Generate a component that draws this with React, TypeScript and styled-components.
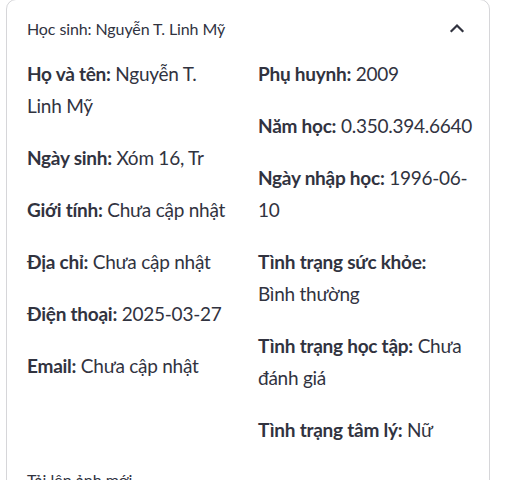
import React from "react";
import styled, { createGlobalStyle } from "styled-components";

const Global = createGlobalStyle`
  html, body { margin: 0; padding: 0; background: #fff; }
  body { font-family: Lato, "Noto Sans", sans-serif; color: rgb(49, 51, 63); }
`;

const Page = styled.div`
  padding: 0 42px 0 6px;
`;

const Expander = styled.div`
  width: 484px;
  box-sizing: border-box;
  border: 1px solid rgba(49, 51, 63, 0.2);
  border-radius: 10px;
  margin-top: -1px;
`;

const Summary = styled.div`
  display: flex;
  align-items: center;
  justify-content: space-between;
  padding: 15px 20px 14px 20px;
  font-size: 16px;
  letter-spacing: -0.1px;
  line-height: 28px;
`;

const ChevronBox = styled.span`
  display: flex;
  margin-top: -3px;
`;

const Content = styled.div`
  padding: 1px 20px 20px 20px;
  display: flex;
  flex-direction: column;
  gap: 20px;
`;

const Columns = styled.div`
  display: grid;
  grid-template-columns: 1fr 1fr;
  gap: 20px;
`;

const Column = styled.div`
  display: flex;
  flex-direction: column;
  gap: 20px;
  min-width: 0;
`;

const Field = styled.p`
  margin: 0;
  font-size: 19px;
  letter-spacing: -0.25px;
  line-height: 32px;
  white-space: nowrap;
`;

const Label = styled.strong`
  font-weight: 700;
`;

const UploadLabel = styled.div`
  font-size: 16px;
  line-height: 28px;
`;

const Chevron = () => (
  <svg width="24" height="24" viewBox="0 0 24 24" fill="none">
    <path d="M6.5 15 L12 9.5 L17.5 15" stroke="rgb(49,51,63)" strokeWidth="2.2" strokeLinecap="square" />
  </svg>
);

type Item = { label: string; lines: string[] };

const left: Item[] = [
  { label: "Họ và tên:", lines: ["Nguyễn T.", "Linh Mỹ"] },
  { label: "Ngày sinh:", lines: ["Xóm 16, Tr"] },
  { label: "Giới tính:", lines: ["Chưa cập nhật"] },
  { label: "Địa chỉ:", lines: ["Chưa cập nhật"] },
  { label: "Điện thoại:", lines: ["2025-03-27"] },
  { label: "Email:", lines: ["Chưa cập nhật"] },
];

const right: Item[] = [
  { label: "Phụ huynh:", lines: ["2009"] },
  { label: "Năm học:", lines: ["0.350.394.6640"] },
  { label: "Ngày nhập học:", lines: ["1996-06-", "10"] },
  { label: "Tình trạng sức khỏe:", lines: ["", "Bình thường"] },
  { label: "Tình trạng học tập:", lines: ["Chưa", "đánh giá"] },
  { label: "Tình trạng tâm lý:", lines: ["Nữ"] },
];

const FieldRow = ({ item }: { item: Item }) => (
  <Field>
    <Label>{item.label}</Label>
    {item.lines.map((line, i) => (
      <React.Fragment key={i}>
        {i > 0 ? <br /> : line ? " " : null}
        {line}
      </React.Fragment>
    ))}
  </Field>
);

export default function App() {
  return (
    <>
      <Global />
      <Page>
        <Expander>
          <Summary>
            <span>Học sinh: Nguyễn T. Linh Mỹ</span>
            <ChevronBox>
              <Chevron />
            </ChevronBox>
          </Summary>
          <Content>
            <Columns>
              <Column>
                {left.map((item) => (
                  <FieldRow key={item.label} item={item} />
                ))}
              </Column>
              <Column>
                {right.map((item) => (
                  <FieldRow key={item.label} item={item} />
                ))}
              </Column>
            </Columns>
            <UploadLabel>Tải lên ảnh mới</UploadLabel>
          </Content>
        </Expander>
      </Page>
    </>
  );
}
